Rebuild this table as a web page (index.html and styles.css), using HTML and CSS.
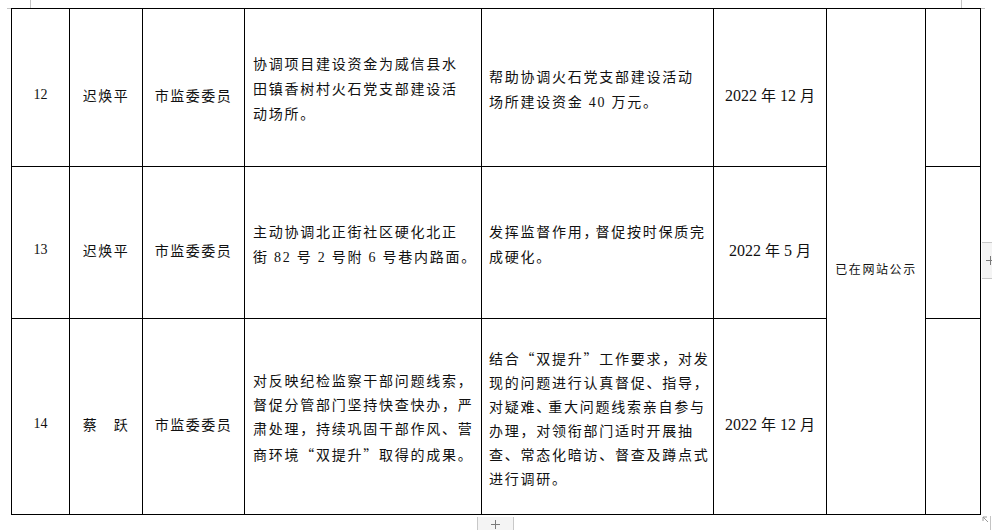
FILE: index.html
```html
<!DOCTYPE html>
<html lang="zh-CN">
<head>
<meta charset="utf-8">
<title>表格</title>
<link rel="stylesheet" href="styles.css">
</head>
<body>
<div class="page">
  <span class="mark mark-tl-v"></span>
  <span class="mark mark-tl-h"></span>
  <span class="mark mark-tr-v"></span>
  <span class="mark mark-tr-h"></span>

  <table class="grid">
    <colgroup>
      <col class="c1"><col class="c2"><col class="c3"><col class="c4"><col class="c5"><col class="c6"><col class="c7"><col class="c8">
    </colgroup>
    <tbody>
      <tr class="r12">
        <td class="num">12</td>
        <td class="cn">迟焕平</td>
        <td class="cn">市监委委员</td>
        <td class="txt a4">协调项目建设资金为威信县水<br>田镇香树村火石党支部建设活<br>动场所。</td>
        <td class="txt a5">帮助协调火石党支部建设活动<br>场所建设资金 40 万元。</td>
        <td class="date">2022 <span class="hz">年</span> 12 <span class="hz">月</span></td>
        <td class="pub" rowspan="3">已在网站公示</td>
        <td></td>
      </tr>
      <tr class="r13">
        <td class="num">13</td>
        <td class="cn">迟焕平</td>
        <td class="cn">市监委委员</td>
        <td class="txt a4">主动协调北正街社区硬化北正<br>街 82 号 2 号附 6 号巷内路面。</td>
        <td class="txt a5">发挥监督作用<span class="tight">，</span>督促按时保质完<br>成硬化。</td>
        <td class="date">2022 <span class="hz">年</span> 5 <span class="hz">月</span></td>
        <td></td>
      </tr>
      <tr class="r14">
        <td class="num">14</td>
        <td class="cn">蔡　跃</td>
        <td class="cn">市监委委员</td>
        <td class="txt a4 dense">对反映纪检监察干部问题线索，<br>督促分管部门坚持快查快办，严<br>肃处理，持续巩固干部作风、营<br>商环境<span class="q">“</span>双提升<span class="q">”</span>取得的成果。</td>
        <td class="txt a5 dense">结合<span class="q">“</span>双提升<span class="q">”</span>工作要求，对发<br>现的问题进行认真督促、指导，<br>对疑难<span class="tight">、</span>重大问题线索亲自参与<br>办理，对领衔部门适时开展抽<br>查、常态化暗访、督查及蹲点式<br>进行调研。</td>
        <td class="date">2022 <span class="hz">年</span> 12 <span class="hz">月</span></td>
        <td></td>
      </tr>
    </tbody>
  </table>

  <div class="add add-right" aria-label="添加列"><span class="plus"></span></div>
  <div class="add add-bottom" aria-label="添加行"><span class="plus"></span></div>
  <span class="mark mark-br-v"></span>
  <svg class="resize" width="7" height="7" viewBox="0 0 7 7" aria-hidden="true">
    <path d="M1 1h4M1 1v4M1 1l5 5" stroke="#9a9a9a" stroke-width="1" fill="none"/>
  </svg>
</div>
</body>
</html>
```

FILE: styles.css
```css
html, body {
  margin: 0;
  padding: 0;
  background: #ffffff;
}

.page {
  position: relative;
  width: 992px;
  height: 530px;
  overflow: hidden;
  padding-top: 8px;
  box-sizing: border-box;
  font-family: "Liberation Serif", "Noto Sans CJK SC", serif;
  color: #111;
}

.grid {
  margin-left: 11px;
  border-collapse: collapse;
  table-layout: fixed;
  width: 970px;
}

.c1 { width: 58px; }
.c2 { width: 73px; }
.c3 { width: 102px; }
.c4 { width: 237px; }
.c5 { width: 232px; }
.c6 { width: 113px; }
.c7 { width: 99px; }
.c8 { width: 55px; }

.grid td {
  border: 1px solid #000;
  padding: 14px 0 0 0;
  vertical-align: middle;
  text-align: center;
  white-space: nowrap;
}

.r12 { height: 158px; }
.r13 { height: 152px; }
.r14 { height: 196px; }

.num {
  font-size: 14px;
}

.cn {
  font-family: "Noto Sans CJK SC", sans-serif;
  font-size: 14px;
  letter-spacing: 1.5px;
}

.grid td.txt {
  text-align: left;
  font-size: 14px;
  letter-spacing: 1.75px;
  line-height: 25px;
  padding-top: 4px;
}

.grid td.a4 { padding-left: 8px; }
.grid td.a5 { padding-left: 7px; }
.grid td.dense { line-height: 24px; }

.q {
  font-family: "Noto Sans CJK SC", sans-serif;
}

.tight {
  letter-spacing: -2px;
}

.date {
  font-size: 16px;
}

.hz {
  font-family: "Noto Sans CJK SC", sans-serif;
  font-size: 15px;
}

.grid td.pub {
  font-family: "Noto Sans CJK SC", sans-serif;
  font-size: 12px;
  letter-spacing: 1.6px;
  padding-top: 14px;
}

.mark {
  position: absolute;
  background: #c4c4c4;
}
.mark-tl-v { left: 30px; top: 0; width: 1px; height: 8px; }
.mark-tl-h { left: 7px; top: 8px; width: 4px; height: 1px; }
.mark-tr-v { left: 961px; top: 0; width: 1px; height: 8px; }
.mark-tr-h { left: 981px; top: 8px; width: 4px; height: 1px; }
.mark-br-v { left: 990px; top: 516px; width: 1px; height: 14px; }

.add {
  position: absolute;
  background: #f4f4f4;
  box-sizing: border-box;
  display: flex;
  align-items: center;
}
.add-right {
  left: 982px;
  top: 242px;
  width: 14px;
  height: 37px;
  border-top: 1px solid #c8c8c8;
  border-bottom: 1px solid #c8c8c8;
  padding-left: 4px;
}
.add-bottom {
  left: 477px;
  top: 517px;
  width: 37px;
  height: 16px;
  border-left: 1px solid #c8c8c8;
  border-right: 1px solid #c8c8c8;
  align-items: flex-start;
  justify-content: center;
  padding-top: 3px;
}

.plus {
  position: relative;
  display: block;
  width: 9px;
  height: 9px;
  flex: none;
}
.plus::before,
.plus::after {
  content: "";
  position: absolute;
  background: #7a7a7a;
}
.plus::before {
  left: 0;
  top: 4px;
  width: 9px;
  height: 1px;
}
.plus::after {
  left: 4px;
  top: 0;
  width: 1px;
  height: 9px;
}

.resize {
  position: absolute;
  left: 982px;
  top: 516px;
}
```
